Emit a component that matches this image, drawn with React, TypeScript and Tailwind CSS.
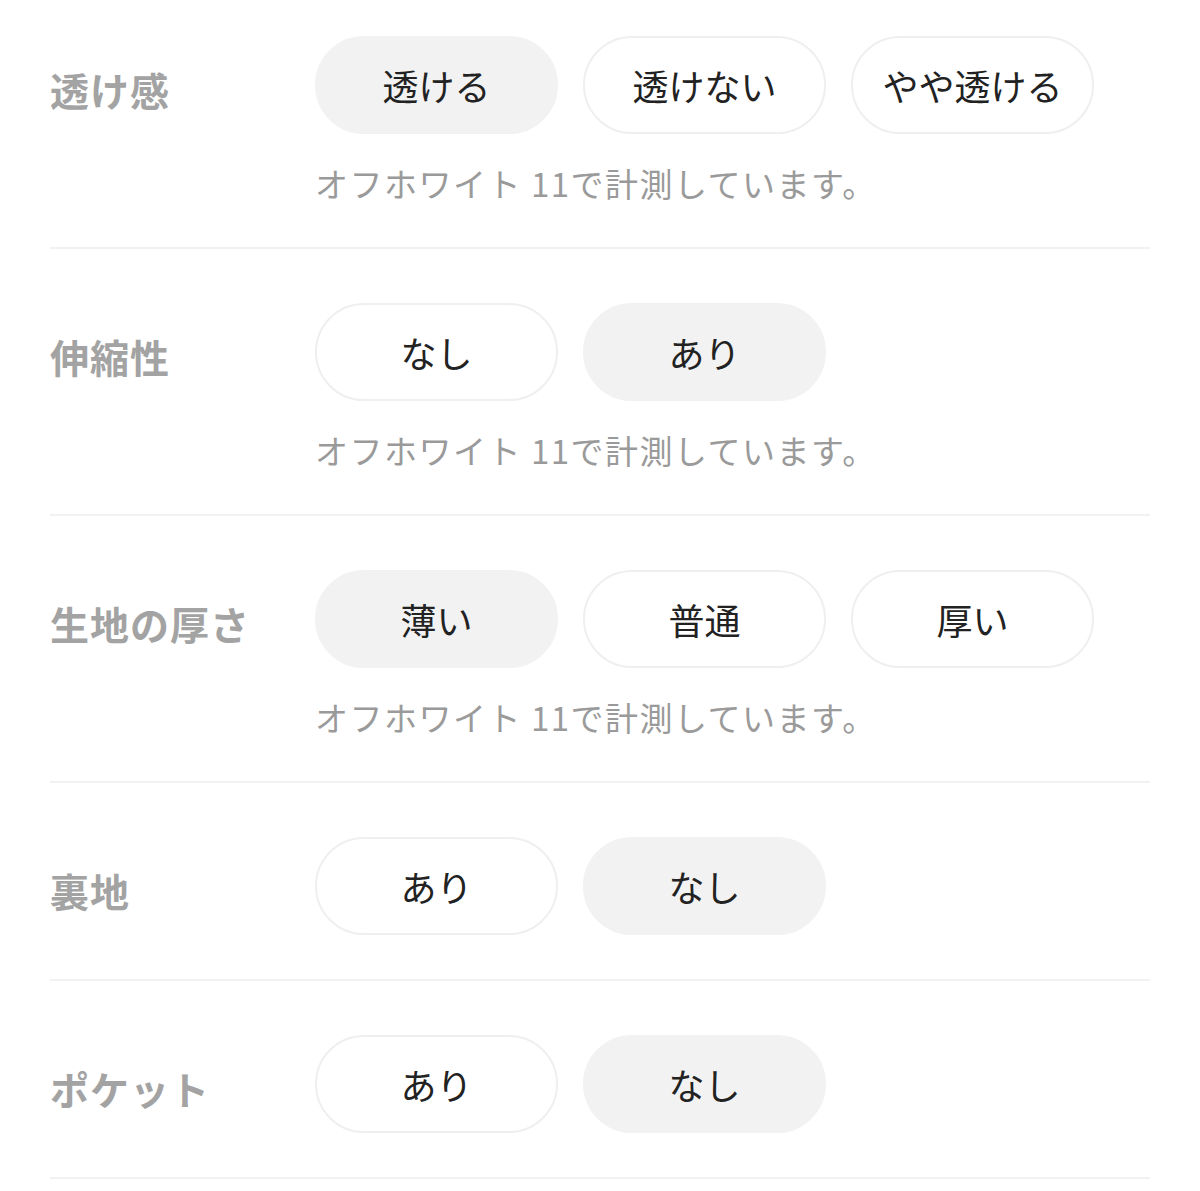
import React from 'react'

type Row = {
  label: string
  options: string[]
  selected: number
  note?: string
}

const NOTE = 'オフホワイト 11で計測しています。'

const rows: Row[] = [
  { label: '透け感', options: ['透ける', '透けない', 'やや透ける'], selected: 0, note: NOTE },
  { label: '伸縮性', options: ['なし', 'あり'], selected: 1, note: NOTE },
  { label: '生地の厚さ', options: ['薄い', '普通', '厚い'], selected: 0, note: NOTE },
  { label: '裏地', options: ['あり', 'なし'], selected: 1 },
  { label: 'ポケット', options: ['あり', 'なし'], selected: 1 },
]

function Pill({ text, active }: { text: string; active: boolean }) {
  return (
    <div
      className={`w-[243px] h-[98px] rounded-full flex items-center justify-center text-[36px] text-[#222222] border-2 ${
        active ? 'bg-[#f2f2f2] border-[#f2f2f2]' : 'bg-white border-[#efefef]'
      }`}
    >
      {text}
    </div>
  )
}

export default function App() {
  return (
    <div
      className="w-[1200px] min-h-[1191px] bg-white px-[50px]"
      style={{ fontFamily: '"Noto Sans CJK JP", "Noto Sans", sans-serif' }}
    >
      {rows.map((row, i) => (
        <div
          key={row.label}
          className={`flex border-b-2 border-[#f2f2f2] pb-[44px] ${i === 0 ? 'pt-[36px]' : 'pt-[54px]'}`}
        >
          <div className="w-[265px] h-[98px] flex items-center pt-[8px] text-[39px] tracking-[1px] font-bold text-[#a3a3a3] leading-none">
            {row.label}
          </div>
          <div className="flex flex-col">
            <div className="flex gap-[25px]">
              {row.options.map((o, j) => (
                <Pill key={o} text={o} active={j === row.selected} />
              ))}
            </div>
            {row.note && (
              <div className="mt-[29px] h-[40px] leading-[40px] text-[33px] tracking-[1.5px] text-[#9a9a9a]">
                {row.note}
              </div>
            )}
          </div>
        </div>
      ))}
    </div>
  )
}
